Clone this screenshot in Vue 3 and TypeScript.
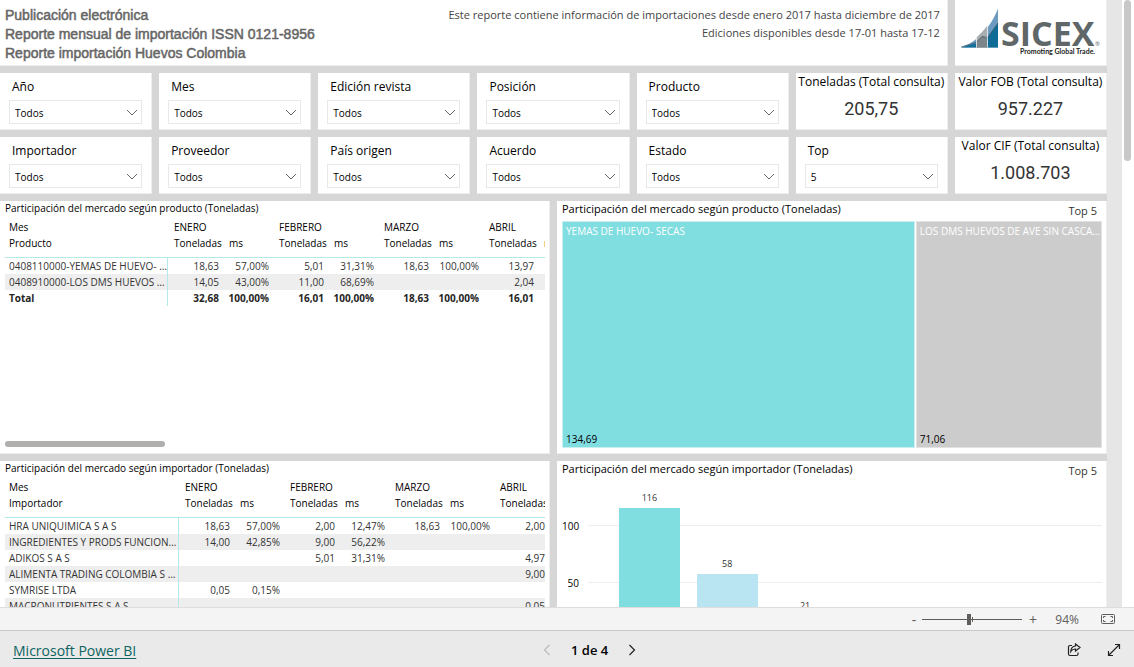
<script setup lang="ts">
import { ref } from 'vue'

interface Slicer { id: string; label: string; value: string }
interface Row { name: string; cells: string[]; total?: boolean }
interface Matrix { id: string; title: string; field: string; rows: Row[] }

const firstSlicers: Slicer[] = [
  { id: 'ano', label: 'Año', value: 'Todos' },
  { id: 'mes', label: 'Mes', value: 'Todos' },
  { id: 'edicion', label: 'Edición revista', value: 'Todos' },
  { id: 'posicion', label: 'Posición', value: 'Todos' },
  { id: 'producto', label: 'Producto', value: 'Todos' },
]
const secondSlicers: Slicer[] = [
  { id: 'importador', label: 'Importador', value: 'Todos' },
  { id: 'proveedor', label: 'Proveedor', value: 'Todos' },
  { id: 'pais', label: 'País origen', value: 'Todos' },
  { id: 'acuerdo', label: 'Acuerdo', value: 'Todos' },
  { id: 'estado', label: 'Estado', value: 'Todos' },
  { id: 'top', label: 'Top', value: '5' },
]
const months = ['ENERO', 'FEBRERO', 'MARZO', 'ABRIL']

const products: Matrix = {
  id: 'productos',
  title: 'Participación del mercado según producto (Toneladas)',
  field: 'Producto',
  rows: [
    { name: '0408110000-YEMAS DE HUEVO- SECAS', cells: ['18,63', '57,00%', '5,01', '31,31%', '18,63', '100,00%', '13,97', ''] },
    { name: '0408910000-LOS DMS HUEVOS DE AVE', cells: ['14,05', '43,00%', '11,00', '68,69%', '', '', '2,04', ''] },
    { name: 'Total', total: true, cells: ['32,68', '100,00%', '16,01', '100,00%', '18,63', '100,00%', '16,01', ''] },
  ],
}
const importers: Matrix = {
  id: 'importadores',
  title: 'Participación del mercado según importador (Toneladas)',
  field: 'Importador',
  rows: [
    { name: 'HRA UNIQUIMICA S A S', cells: ['18,63', '57,00%', '2,00', '12,47%', '18,63', '100,00%', '2,00', ''] },
    { name: 'INGREDIENTES Y PRODS FUNCIONALES', cells: ['14,00', '42,85%', '9,00', '56,22%', '', '', '', ''] },
    { name: 'ADIKOS S A S', cells: ['', '', '5,01', '31,31%', '', '', '4,97', ''] },
    { name: 'ALIMENTA TRADING COLOMBIA S A S', cells: ['', '', '', '', '', '', '9,00', ''] },
    { name: 'SYMRISE LTDA', cells: ['0,05', '0,15%', '', '', '', '', '', ''] },
    { name: 'MACRONUTRIENTES S A S', cells: ['', '', '', '', '', '', '0,05', ''] },
  ],
}
const tiles = [
  { name: 'YEMAS DE HUEVO- SECAS', value: '134,69', weight: 134.69, tone: 'teal' },
  { name: 'LOS DMS HUEVOS DE AVE SIN CASCARON', value: '71,06', weight: 71.06, tone: 'gray' },
]
const tileColumns = tiles.map((t) => `minmax(0, ${t.weight}fr)`).join(' ')
const axisMax = 120
const ticks = [100, 50]
const bars = [
  { value: 116, tone: 'teal' },
  { value: 58, tone: 'sky' },
  { value: 21, tone: 'gray' },
]
const share = (n: number): string => `${(n / axisMax) * 100}%`
const zoom = ref(94)
</script>

<template>
  <div class="page">
    <div class="viewport">
      <main class="report">
        <header class="card heading">
          <h1>Publicación electrónica<br>Reporte mensual de importación ISSN 0121-8956<br>Reporte importación Huevos Colombia</h1>
          <p>Este reporte contiene información de importaciones desde enero 2017 hasta diciembre de 2017<br>Ediciones disponibles desde 17-01 hasta 17-12</p>
        </header>
        <div class="card logo">
          <svg viewBox="0 0 152 66" width="152" height="66" role="img" aria-label="SICEX">
            <path d="M6 47.500C22 42 36 27 43 8.500V47.500Z" fill="#6d9bc0" />
            <path d="M21.500 37.500C25 34 29 30 32.500 25.500V47.500H21.500Z" fill="#a9aeb0" />
            <path d="M6 47.500L21.500 43V47.500Z" fill="#136f99" />
            <path d="M21.500 42L27 36L32.500 38V47.500H21.500Z" fill="#7d8588" />
            <path d="M32.500 37L43 23V47.500H32.500Z" fill="#0f6c96" />
            <path d="M6 47L21 42.500L27 36.500L33 37.500L43 23" fill="none" stroke="#455a66" stroke-width=".7" />
            <path d="M21.500 38V47.500M32.500 25V47.500" stroke="#fff" stroke-width=".7" />
            <text x="46" y="46" class="brand">SICEX</text>
            <text x="140" y="46" class="mark">®</text>
            <text x="65" y="54" class="tagline">Promoting Global Trade.</text>
          </svg>
        </div>

        <div v-for="s in firstSlicers" :key="s.id" class="card slicer">
          <label :for="s.id">{{ s.label }}</label>
          <div class="picker">
            <select :id="s.id"><option>{{ s.value }}</option></select>
            <svg viewBox="0 0 12 7" width="12" height="7" aria-hidden="true"><path d="M1 1L6 6L11 1" /></svg>
          </div>
        </div>
        <section class="card kpi"><h2>Toneladas (Total consulta)</h2><strong>205,75</strong></section>
        <section class="card kpi"><h2>Valor FOB (Total consulta)</h2><strong>957.227</strong></section>

        <div v-for="s in secondSlicers" :key="s.id" class="card slicer">
          <label :for="s.id">{{ s.label }}</label>
          <div class="picker">
            <select :id="s.id"><option>{{ s.value }}</option></select>
            <svg viewBox="0 0 12 7" width="12" height="7" aria-hidden="true"><path d="M1 1L6 6L11 1" /></svg>
          </div>
        </div>
        <section class="card kpi"><h2>Valor CIF (Total consulta)</h2><strong>1.008.703</strong></section>

        <div class="panels">
          <section v-for="(m, i) in [products, importers]" :key="m.id" class="card matrix" :class="m.id">
            <h2>{{ m.title }}</h2>
            <div class="clip">
              <table>
                <colgroup>
                  <col class="name-col">
                  <template v-for="n in months" :key="n"><col class="ton-col"><col class="ms-col"></template>
                </colgroup>
                <thead>
                  <tr><th scope="col">Mes</th><th v-for="n in months" :key="n" colspan="2" scope="colgroup">{{ n }}</th></tr>
                  <tr class="fields">
                    <th scope="col">{{ m.field }}</th>
                    <template v-for="n in months" :key="n"><th scope="col">Toneladas</th><th scope="col">ms</th></template>
                  </tr>
                </thead>
                <tbody>
                  <tr v-for="r in m.rows" :key="r.name" :class="{ total: r.total }">
                    <th scope="row">{{ r.name }}</th>
                    <td v-for="(c, k) in r.cells" :key="k">{{ c }}</td>
                  </tr>
                </tbody>
              </table>
            </div>
            <div v-if="i === 0" class="hscroll" />
          </section>

          <section class="card visual treemap">
            <div class="title"><h2>Participación del mercado según producto (Toneladas)</h2><span>Top 5</span></div>
            <div class="tiles" :style="{ gridTemplateColumns: tileColumns }">
              <div v-for="t in tiles" :key="t.name" class="tile" :class="t.tone">
                <span class="tile-name">{{ t.name }}</span><span class="tile-value">{{ t.value }}</span>
              </div>
            </div>
          </section>

          <section class="card visual columns">
            <div class="title"><h2>Participación del mercado según importador (Toneladas)</h2><span>Top 5</span></div>
            <div class="plot">
              <div v-for="t in ticks" :key="t" class="tick" :style="{ bottom: share(t) }"><span>{{ t }}</span><i /></div>
              <div class="bars">
                <div v-for="b in bars" :key="b.value" class="slot">
                  <span>{{ b.value }}</span><div class="bar" :class="b.tone" :style="{ height: share(b.value) }" />
                </div>
              </div>
            </div>
          </section>
        </div>
      </main>
      <div class="vscroll"><div /></div>
    </div>

    <div class="zoombar">
      <button type="button" aria-label="Alejar" class="minus">-</button>
      <input v-model.number="zoom" type="range" min="0" max="200" aria-label="Zoom">
      <button type="button" aria-label="Acercar" class="plus">+</button>
      <output>{{ zoom }}%</output>
      <button type="button" aria-label="Ajustar a la página" class="fit">
        <svg viewBox="0 0 14 10" width="14" height="10"><rect x=".5" y=".5" width="13" height="9" rx="1" /><path d="M2.500 4V2.500H4.500M9.500 2.500H11.500V4M11.500 6V7.500H9.500M4.500 7.500H2.500V6" /></svg>
      </button>
    </div>

    <footer class="footer">
      <a href="#">Microsoft Power BI</a>
      <nav>
        <button type="button" aria-label="Página anterior" disabled><svg viewBox="0 0 8 12" width="8" height="12"><path d="M6.500 1L1.500 6L6.500 11" /></svg></button>
        <span>1 de 4</span>
        <button type="button" aria-label="Página siguiente"><svg viewBox="0 0 8 12" width="8" height="12"><path d="M1.500 1L6.500 6L1.500 11" /></svg></button>
      </nav>
      <div class="actions">
        <button type="button" aria-label="Compartir">
          <svg viewBox="0 0 14 14" width="14" height="14"><path d="M5 2.500H3Q1.500 2.500 1.500 4V11Q1.500 12.500 3 12.500H9.500Q11 12.500 11 11V9.500" /><path d="M8.500 1L13 4.500L8.500 8V6Q5.500 5.800 3.800 8.500Q4 3.500 8.500 3Z" /></svg>
        </button>
        <button type="button" aria-label="Pantalla completa">
          <svg viewBox="0 0 14 14" width="14" height="14"><path d="M1.500 12.500L12.500 1.500M8 1.500H12.500V6M1.500 8V12.500H6" /></svg>
        </button>
      </div>
    </footer>
  </div>
</template>

<style>
html, body { margin: 0; overflow: hidden; }
</style>

<style scoped>
.page { display: flex; flex-direction: column; height: 100vh; font-family: "Open Sans", "Noto Sans", sans-serif; font-size: 10px; color: #000; background: #fff; }
.page * { box-sizing: border-box; }
h1, h2, p { margin: 0; font-size: inherit; font-weight: 400; }
button { border: 0; padding: 0; background: none; font: inherit; color: inherit; display: flex; align-items: center; justify-content: center; }
svg { display: block; fill: none; }

.viewport { flex: 1; min-height: 0; display: flex; overflow: hidden; background: #e6e6e6; }
.report { flex: 1; min-width: 0; align-self: flex-start; display: grid; grid-template-columns: repeat(7, minmax(0, 1fr)); grid-template-rows: 66px 57px 57px; gap: 7px; background: #d6d6d6; }
.card { background: #fff; border-right: 1px solid #eee; border-bottom: 1px solid #eee; min-width: 0; overflow: hidden; }
.vscroll { width: 12px; margin-left: 15px; background: #fff; padding: 0 3px 0 2px; }
.vscroll div { height: 161px; border-radius: 4px; background: #c8c8c8; }

.heading { grid-column: span 6; display: flex; justify-content: space-between; padding: 6px 7px 0 5px; }
.heading h1 { font: 400 14px/19px "Liberation Sans", Arial, sans-serif; color: #666; -webkit-text-stroke: 0.5px #666; }
.heading p { font-size: 11px; line-height: 18px; color: #444; text-align: right; }
.brand { font: 700 34px "Open Sans", sans-serif; fill: #5f6769; }
.mark { font: 6px "Open Sans", sans-serif; fill: #5f6769; }
.tagline { font: 700 7px Lato, sans-serif; fill: #222; }

.slicer { padding: 5px 9px 0; }
.slicer label { display: block; padding-left: 3px; font-size: 12px; line-height: 18px; }
.picker { position: relative; margin-top: 4px; }
.picker select { display: block; width: 100%; height: 24px; padding: 2px 20px 0 5px; border: 1px solid #e8e8e8; border-radius: 0; appearance: none; background: #fff; font: inherit; color: #000; }
.picker svg { position: absolute; right: 4px; top: 9px; stroke: #666; pointer-events: none; }

.kpi { text-align: center; }
.kpi h2 { font-size: 12px; line-height: 18px; white-space: nowrap; }
.kpi strong { display: block; margin-top: 5px; font: 400 18px/26px Roboto, sans-serif; color: #333; }

.panels { grid-column: 1 / -1; display: grid; grid-template-columns: repeat(2, minmax(0, 1fr)); grid-template-rows: 253px 253px; gap: 7px; }
.panels .matrix { grid-column: 1; }
.panels .visual { grid-column: 2; }
.productos, .treemap { grid-row: 1; }
.importadores, .columns { grid-row: 2; }

.matrix { display: flex; flex-direction: column; padding: 0 4px 0 5px; }
.matrix h2 { line-height: 14px; white-space: nowrap; }
.clip { flex: 1; overflow: hidden; padding-top: 4px; }
table { table-layout: fixed; border-collapse: separate; border-spacing: 0; line-height: 16px; width: 583px; }
.importadores table { width: 594px; }
.name-col { width: 163px; }
.importadores .name-col { width: 174px; }
.ton-col { width: 55px; }
.ms-col { width: 50px; }
th, td { height: 16px; padding: 0 4px; overflow: hidden; white-space: nowrap; text-overflow: ellipsis; font-weight: 400; text-align: left; }
thead th { padding: 0 0 0 6px; text-overflow: clip; }
thead th:first-child { padding-left: 4px; }
.fields th { height: 23px; vertical-align: top; border-bottom: 1px solid #b4e9e9; }
tbody { color: #333; }
tbody th { padding-right: 0; border-right: 1px solid #b4e9e9; }
td { text-align: right; }
tbody tr:nth-child(even) > * { background: #eee; }
.total > * { font-weight: 700; color: #252423; }
.hscroll { width: 160px; height: 6px; margin-bottom: 6px; border-radius: 3px; background: #b0afae; }

.visual { display: flex; flex-direction: column; padding: 0 4px 5px 5px; }
.title { display: flex; justify-content: space-between; font-size: 11px; line-height: 16px; white-space: nowrap; }
.title span { margin: 2px 5px 0 0; color: #333; }
.tiles { flex: 1; display: grid; gap: 1px; margin-top: 2px; }
.tile { min-width: 0; display: flex; flex-direction: column; justify-content: space-between; padding: 1px 0 0 3px; border: 1px solid #c9f0f0; }
.tile span { overflow: hidden; white-space: nowrap; text-overflow: ellipsis; line-height: 16px; }
.tile-name { color: #fff; }
.teal { background: #80dde0; }
.gray { background: #ccc; border-color: #e2e2e2; }
.sky { background: #b9e4f1; }

.plot { position: relative; height: 137px; margin-top: 24px; flex: none; }
.tick { position: absolute; left: 0; right: 0; height: 0; display: flex; align-items: center; }
.tick span { width: 17px; margin-right: 9px; text-align: right; }
.tick i { flex: 1; height: 1px; background: #eee; }
.bars { position: relative; height: 100%; margin-left: 26px; padding: 0 33px 0 31px; display: grid; grid-template-columns: repeat(6, minmax(0, 1fr)); column-gap: 17px; }
.slot { height: 137px; display: flex; flex-direction: column; justify-content: flex-end; align-items: stretch; }
.slot span { text-align: center; font-size: 9px; line-height: 12px; margin-bottom: 4px; color: #333; }
.bar { flex: none; }

.zoombar { height: 24px; flex: none; display: flex; align-items: center; justify-content: flex-end; padding-right: 19px; background: #f4f4f4; border-top: 1px solid #ddd; border-bottom: 1px solid #c8c8c8; color: #605e5c; font-size: 12px; }
.minus, .plus { width: 8px; height: 20px; font-size: 14px; }
.zoombar input { appearance: none; width: 104px; height: 12px; margin: 0 5px 0 2px; background: linear-gradient(#605e5c, #605e5c) 52px 50% / 1px 5px no-repeat, linear-gradient(#605e5c, #605e5c) 50% 50% / 100px 1px no-repeat; }
.zoombar input::-webkit-slider-thumb { appearance: none; width: 4px; height: 11px; background: #605e5c; }
.zoombar output { width: 50px; padding-right: 8px; text-align: right; }
.fit { margin-left: 14px; }
.fit svg { stroke: #605e5c; }

.footer { height: 36px; flex: none; display: flex; align-items: center; justify-content: space-between; padding: 2px 13px 0; background: #eaeaea; }
.footer a { font-size: 14px; color: #0d6461; text-underline-offset: 2px; }
.footer nav { display: flex; align-items: center; gap: 20px; font-size: 13px; font-weight: 600; }
.footer svg { stroke: #222; stroke-width: 1.2; }
.footer button:disabled svg { stroke: #bbb; }
.actions { display: flex; justify-content: flex-end; gap: 26px; width: 78px; }
</style>
